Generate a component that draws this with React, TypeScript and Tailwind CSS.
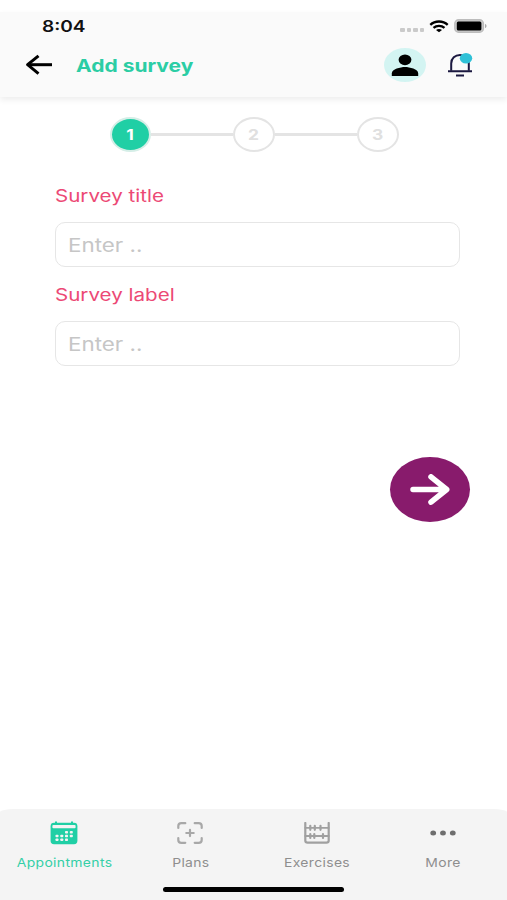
import React from 'react';

const BackIcon = () => (
  <svg width="28" height="22" viewBox="0 0 28 22" fill="none" stroke="#000" strokeWidth="3">
    <path d="M27 10.7H3" />
    <path d="M13.5 1.8L2.6 10.7l10.9 8.9" strokeLinejoin="round" />
  </svg>
);

const UserIcon = () => (
  <svg width="28" height="24" viewBox="0 0 28 24" fill="#000">
    <ellipse cx="14" cy="6.8" rx="6.4" ry="5.4" />
    <path d="M.8 23v-2.6c0-4.1 8.6-6.3 13.2-6.3s13.2 2.2 13.2 6.3V23z" />
  </svg>
);

const BellIcon = () => (
  <svg width="26" height="26" viewBox="0 0 26 26" fill="none" stroke="#1b1840" strokeWidth="2">
    <path d="M4.2 18.8v-7.3C4.2 6.3 8.1 3 13 3s8.8 3.3 8.8 8.5v7.3" />
    <path d="M1 19.3h24M9 23.5h8" />
    <ellipse cx="19" cy="6.2" rx="6.2" ry="5.2" fill="#2fc1d7" stroke="none" />
  </svg>
);

const WifiIcon = () => (
  <svg width="20" height="13" viewBox="0 0 20 13" fill="none" stroke="#000" strokeWidth="2.3">
    <path d="M1.3 4.8C6 .4 14 .4 18.7 4.8" />
    <path d="M4.5 7.9c3.1-2.8 7.9-2.8 11 0" />
    <path d="M10 12.3L7 10c1.7-1.4 4.3-1.4 6 0z" fill="#000" stroke="none" />
  </svg>
);

const BatteryIcon = () => (
  <svg width="33" height="14" viewBox="0 0 33 14">
    <rect x=".8" y=".8" width="28.6" height="12.4" rx="3.8" fill="#ccc" stroke="#bcbcbc" strokeWidth="1.4" />
    <rect x="2.8" y="2.5" width="24.6" height="9" rx="1.5" fill="#000" />
    <path d="M31 5c2 .6 2 3.4 0 4z" fill="#aaa" />
  </svg>
);

const calendarDots = [[15, 10], [19.8, 10], [5.5, 13.7], [10.3, 13.7], [15, 13.7], [19.8, 13.7], [5.5, 17.4], [10.3, 17.4], [15, 17.4]];

const CalendarIcon = () => (
  <svg width="28" height="24" viewBox="0 0 28 24">
    <path d="M6 .6v3M22 .6v3" stroke="#20cfa5" strokeWidth="2" />
    <rect x=".6" y="1.8" width="26.8" height="21.4" rx="3.4" fill="#20cfa5" />
    <rect x="2.4" y="4" width="23.2" height="3.2" rx="1" fill="#f4f4f4" />
    <g fill="#f4f4f4">
      {calendarDots.map(([x, y]) => (
        <rect key={`${x}-${y}`} x={x} y={y} width="3" height="2.6" rx=".8" />
      ))}
    </g>
  </svg>
);

const ScanIcon = () => (
  <svg width="26" height="22" viewBox="0 0 26 22" fill="none" stroke="#a8a8a8" strokeWidth="2.2" strokeLinecap="round">
    <path d="M1.3 6V4c0-1.8 1-2.8 3-2.8h4M17.7 1.2h4c2 0 3 1 3 2.8v2M24.7 16v2c0 1.8-1 2.8-3 2.8h-4M8.3 20.8h-4c-2 0-3-1-3-2.8v-2" />
    <path d="M9.3 11h7.4M13 7.9v6.2" />
  </svg>
);

const AbacusIcon = () => (
  <svg width="26" height="22" viewBox="0 0 26 22" fill="none" stroke="#a0a0a0" strokeWidth="2.2" strokeLinecap="round">
    <path d="M1.3 1v17.5c0 1.5.8 2.2 2.3 2.2h18.8c1.5 0 2.3-.7 2.3-2.2V1" />
    <path d="M1.3 5.8h23.4M1.3 14h23.4" strokeWidth="1.8" />
    <path d="M6.3 3.8v4M10.8 3.8v4M16.5 3.8v4M6.3 12v4M10.3 12v4M19 12v4" />
  </svg>
);

const MoreIcon = () => (
  <svg width="26" height="6" viewBox="0 0 26 6" fill="#6e6e6e">
    <ellipse cx="3.2" cy="3" rx="2.9" ry="2.5" />
    <ellipse cx="13" cy="3" rx="2.9" ry="2.5" />
    <ellipse cx="22.8" cy="3" rx="2.9" ry="2.5" />
  </svg>
);

const ArrowIcon = () => (
  <svg width="40" height="32" viewBox="0 0 40 32" fill="none" stroke="#fff" strokeWidth="5.5" strokeLinecap="round" strokeLinejoin="round">
    <path d="M3 15.5H36M21 2.8l15.7 12.7L21 28.2" />
  </svg>
);

const Field = ({ label }: { label: string }) => (
  <label className="block h-[99px]">
    <span className="block h-[38px] w-fit origin-left scale-x-[1.21] text-[17px] leading-[25px] text-[#ec4975]">{label}</span>
    <span className="flex h-[45px] w-[405px] items-center rounded-[10px] border border-[#e6e6e6] bg-white pt-[2px] pl-[12px]">
      <input
        type="text"
        placeholder="Enter .."
        className="w-[310px] origin-left scale-x-[1.21] bg-transparent text-[18.5px] outline-none placeholder:text-[#c6c6c6]"
      />
    </span>
  </label>
);

const steps = [1, 2, 3];

const tabs = [
  { name: 'Appointments', icon: <CalendarIcon />, active: true },
  { name: 'Plans', icon: <ScanIcon />, active: false },
  { name: 'Exercises', icon: <AbacusIcon />, active: false },
  { name: 'More', icon: <MoreIcon />, active: false },
];

const App: React.FC = () => {
  return (
    <div className="flex h-[900px] w-[507px] flex-col overflow-hidden bg-white pt-3 font-['Inter','Liberation_Sans',sans-serif]">
      <header className="h-[85px] shrink-0 bg-[#fafafa] shadow-[0_3px_6px_rgba(0,0,0,0.07)]">
        <div className="flex h-[28px] items-center justify-between pr-[20px] pl-[42px]">
          <span className="mt-px origin-left scale-x-[1.23] text-[15.5px] font-semibold text-[#111]">8:04</span>
          <div className="flex items-center">
            <div className="mt-[8px] mr-[5px] flex gap-[2px]">
              {[0, 1, 2, 3].map(i => (
                <span key={i} className="h-[4px] w-[4.5px] rounded-[1px] bg-[#cacaca]" />
              ))}
            </div>
            <WifiIcon />
            <div className="ml-[5px]"><BatteryIcon /></div>
          </div>
        </div>
        <div className="flex h-[50px] items-center pr-[34px] pl-[25px]">
          <button aria-label="Back"><BackIcon /></button>
          <h1 className="mt-[2px] ml-[23px] origin-left scale-x-[1.2] text-[17.5px] font-bold text-[#2bcda4]">Add survey</h1>
          <div className="ml-auto flex items-center gap-[21px]">
            <div className="flex h-[34px] w-[42px] items-center justify-center rounded-[50%] bg-[#d3f4f2]"><UserIcon /></div>
            <BellIcon />
          </div>
        </div>
      </header>

      <main className="flex-1">
        <div className="flex items-center pt-[20px] pl-[110px] text-[14.5px] font-bold">
          {steps.map(step => (
            <React.Fragment key={step}>
              {step > 1 && <div className="h-[3px] w-[82px] bg-[#e4e4e4]" />}
              <div className={`flex h-[35px] items-center justify-center rounded-[50%] border-2 pt-px ${step === 1 ? 'w-[41px] border-[#d5eee7] bg-[#20cfa5] text-white' : 'w-[42px] border-[#e4e4e4] text-[#e0e0e0]'}`}>
                <span className="scale-x-[1.2]">{step}</span>
              </div>
            </React.Fragment>
          ))}
        </div>

        <div className="pt-[32px] pl-[55px]">
          <Field label="Survey title" />
          <Field label="Survey label" />
        </div>

        <div className="flex justify-end pt-[75px] pr-[37px]">
          <button aria-label="Next" className="flex h-[65px] w-[80px] items-center justify-center rounded-[50%] bg-[#881b6c]"><ArrowIcon /></button>
        </div>
      </main>

      <nav className="flex h-[91px] shrink-0 flex-col rounded-t-[14px_3px] bg-[#f4f4f4]">
        <div className="flex h-[78px] px-px">
          {tabs.map(tab => (
            <button key={tab.name} className="flex flex-1 flex-col items-center pt-[11px]">
              <span className="flex h-[26px] items-center">{tab.icon}</span>
              <span className={`mt-[7px] scale-x-[1.18] text-[11.8px] leading-[20px] tracking-[0.3px] ${tab.active ? 'text-[#35cfa7]' : 'text-[#8e8e8e]'}`}>{tab.name}</span>
            </button>
          ))}
        </div>
        <div className="mx-auto h-[5px] w-[181px] rounded-full bg-black" />
      </nav>
    </div>
  );
};

export default App;
